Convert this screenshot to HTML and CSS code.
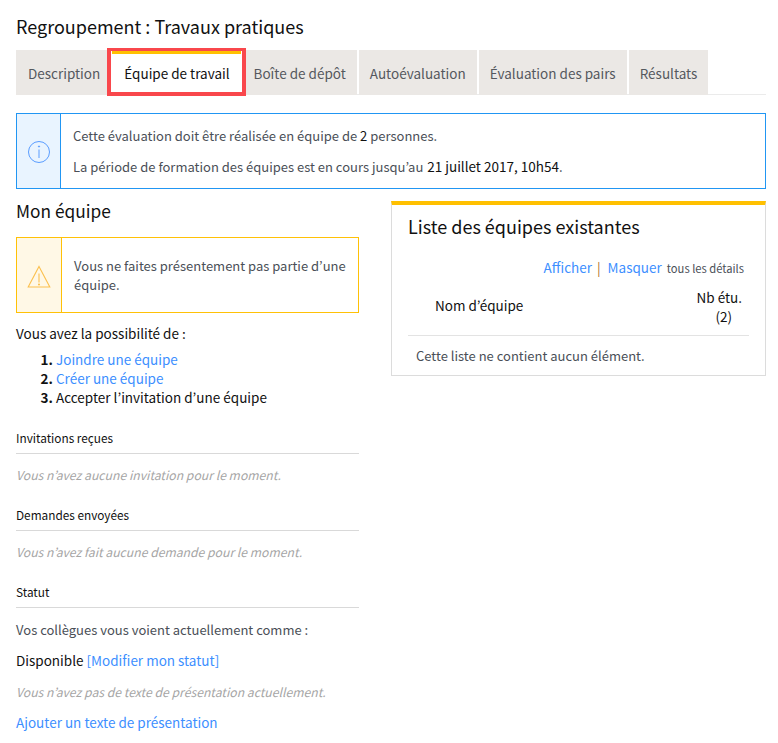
FILE: index.html
```html
<!DOCTYPE html>
<html lang="fr">
<head>
<meta charset="utf-8">
<title>Regroupement : Travaux pratiques</title>
<link rel="stylesheet" href="styles.css">
</head>
<body>
<h1 class="page-title">Regroupement : Travaux pratiques</h1>
<nav class="tabs">
  <a class="tab tab-first">Description</a>
  <a class="tab tab-active">Équipe de travail</a>
  <a class="tab">Boîte de dépôt</a>
  <a class="tab">Autoévaluation</a>
  <a class="tab">Évaluation des pairs</a>
  <a class="tab">Résultats</a>
</nav>
<section class="notice notice-info">
  <div class="notice-icon">
    <svg width="24" height="24" viewBox="0 0 24 24" fill="none" stroke="#5a9dff" stroke-width="1"><circle cx="12" cy="12" r="10.5"/><path d="M12 9.5v8.5"/><circle cx="12" cy="6.5" r=".6" fill="#5a9dff"/></svg>
  </div>
  <div class="notice-body notice-body-info">
    <p>Cette évaluation doit être réalisée en équipe de <span class="dark">2</span> personnes.</p>
    <p>La période de formation des équipes est en cours jusqu’au <span class="dark date">21 juillet 2017, 10h54</span>.</p>
  </div>
</section>
<div class="columns">
  <main class="col-left">
    <h2 class="team-title">Mon équipe</h2>
    <section class="notice notice-warn">
      <div class="notice-icon">
        <svg width="24" height="24" viewBox="0 0 24 24" fill="none" stroke="#fbc04f" stroke-width="1.1"><path d="M12 1.5 22.8 22H1.2Z"/><path d="M12 8.5v9"/><circle cx="12" cy="19.5" r=".5" fill="#fbc04f"/></svg>
      </div>
      <div class="notice-body notice-body-warn">Vous ne faites présentement pas partie d’une équipe.</div>
    </section>
    <p class="lead">Vous avez la possibilité de :</p>
    <ol class="steps">
      <li><a class="link">Joindre une équipe</a></li>
      <li><a class="link">Créer une équipe</a></li>
      <li>Accepter l’invitation d’une équipe</li>
    </ol>
    <h3 class="sub">Invitations reçues</h3>
    <p class="empty">Vous n’avez aucune invitation pour le moment.</p>
    <h3 class="sub">Demandes envoyées</h3>
    <p class="empty">Vous n’avez fait aucune demande pour le moment.</p>
    <h3 class="sub">Statut</h3>
    <p class="status-line">Vos collègues vous voient actuellement comme :</p>
    <p class="status-value">Disponible <a class="link">[Modifier mon statut]</a></p>
    <p class="empty presentation">Vous n’avez pas de texte de présentation actuellement.</p>
    <a class="link add">Ajouter un texte de présentation</a>
  </main>
  <aside class="card">
    <h2 class="card-title">Liste des équipes existantes</h2>
    <div class="toggle"><a class="link">Afficher</a><span class="sep">|</span><a class="link">Masquer</a><span class="toggle-note">tous les détails</span></div>
    <div class="table-head">
      <span class="team-name">Nom d’équipe</span>
      <span class="count">Nb étu.<span class="count-num">(2)</span></span>
    </div>
    <p class="table-empty">Cette liste ne contient aucun élément.</p>
  </aside>
</div>
</body>
</html>
```

FILE: styles.css
```css
* { box-sizing: border-box; }
html, body { margin: 0; padding: 0; }
body {
  padding: 0 12px 0 16px;
  background: #fff;
  color: #111;
  font-family: "Noto Sans CJK KR", "Noto Sans", sans-serif;
  font-size: 13.5px;
  line-height: 19px;
  overflow: hidden;
  height: 743px;
}
p { margin: 0; }
.page-title { margin: 0; padding-top: 14px; height: 50px; font-size: 18px; line-height: 24px; font-weight: 400; color: #111; }
.tabs { display: flex; gap: 2px; height: 45px; border-bottom: 1px solid #ebebeb; }
.tab { height: 45px; padding: 0 11px; background: #ebe8e5; color: #55585e; line-height: 47px; white-space: nowrap; }
.tab-first { padding: 0 10px 0 12px; }
.tab-active {
  position: relative;
  padding: 0 11px 0 12px;
  background: #fff;
  color: #111;
  border-top: 4px solid #ffc000;
  line-height: 39px;
}
.tab-active::after {
  content: "";
  position: absolute;
  top: -6px;
  left: -5px;
  right: -5px;
  bottom: -1px;
  border: 4px solid #f9474c;
  border-top-width: 3px;
}
.notice { display: flex; border-style: solid; border-width: 1px; }
.notice-info { margin-top: 18px; height: 76px; border-color: #2196f3; }
.notice-warn { height: 76px; border-color: #ffc107; }
.notice-icon { display: flex; align-items: center; justify-content: center; flex: none; }
.notice-info .notice-icon { width: 44px; background: #e9f4ff; border-right: 1px solid #2196f3; padding-top: 1px; }
.notice-warn .notice-icon { width: 45px; background: #fff8e6; border-right: 1px solid #ffc107; padding-top: 3px; }
.notice-body { color: #4a4f57; font-size: 13px; }
.notice-body-info { padding-left: 12px; padding-top: 12px; }
.notice-body-info p + p { margin-top: 12px; }
.notice-body-warn { padding: 18px 8px 18px 12px; }
.dark { color: #111; }
.date { margin-left: 1px; font-size: 13.5px; }
.columns { display: flex; justify-content: space-between; }
.col-left { width: 343px; }
.team-title { margin: 10px 0 14px; font-size: 17.3px; line-height: 24px; font-weight: 400; }
.lead { margin-top: 11px; }
.steps { margin: 7px 0 21px; padding-left: 40px; }
.steps li::marker { font-weight: 700; }
.link { color: #3d8fff; }
.sub { margin: 20px 0 0; padding-bottom: 6px; border-bottom: 1px solid #d9d9d9; font-size: 11.8px; line-height: 19px; font-weight: 400; }
.empty { margin-top: 12px; color: #a5a5a5; font-style: italic; font-size: 12.2px; }
.status-line { margin-top: 12px; color: #4a4f57; font-size: 13px; }
.status-value { margin-top: 12px; }
.presentation { margin-top: 13px; }
.add { display: block; margin-top: 11px; }
.card { width: 375px; height: 175px; margin-top: 12px; padding: 0 16px; border: 1px solid #dcdcdc; border-top: 4px solid #ffc000; }
.card-title { margin: 9px 0 0; font-size: 18px; line-height: 24px; font-weight: 400; }
.toggle { display: flex; justify-content: flex-end; align-items: baseline; margin-top: 20px; padding-right: 5px; }
.sep { margin: 0 7px 0 5px; color: #b3702a; }
.toggle-note { margin-left: 5px; font-size: 11.2px; color: #4a4f57; }
.table-head { display: flex; justify-content: space-between; align-items: center; height: 58px; padding: 0 7px 0 27px; border-bottom: 1px solid #e3e3e3; }
.team-name { margin-top: -2px; }
.count-num { display: block; padding-left: 19px; }
.table-empty { margin-top: 10px; padding-left: 8px; color: #4a4f57; font-size: 13px; }
```
